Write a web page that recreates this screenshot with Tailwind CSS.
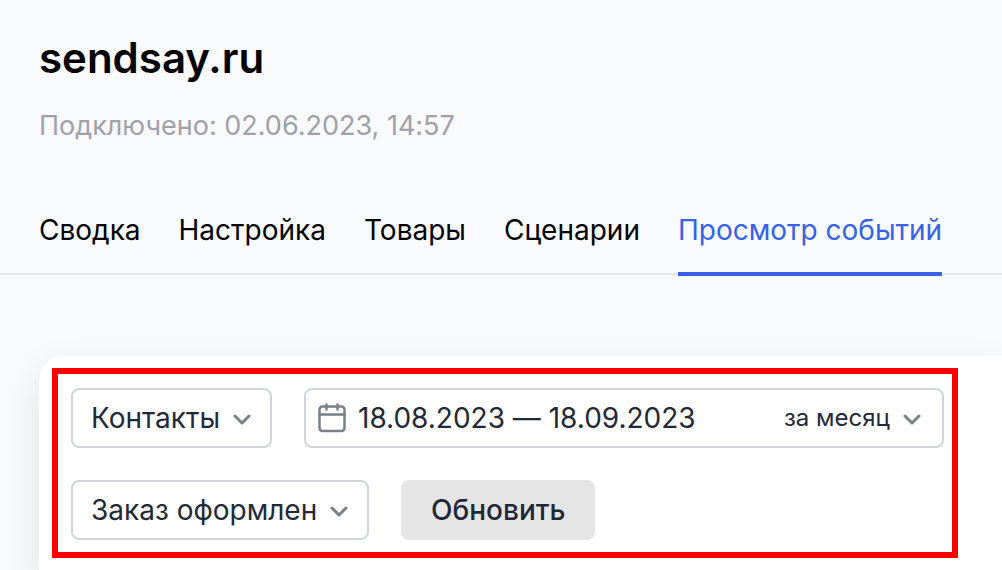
<!DOCTYPE html>
<html lang="ru">
<head>
<meta charset="utf-8">
<meta name="viewport" content="width=device-width, initial-scale=1">
<title>sendsay.ru</title>
<script src="https://cdn.jsdelivr.net/npm/@tailwindcss/browser@4"></script>
</head>
<body class="flex min-h-screen flex-col overflow-x-hidden bg-[#f9fafc] font-['Inter','Liberation_Sans',sans-serif] text-[28px] leading-10 text-black [font-feature-settings:'calt'_0]">
<header class="px-[39px] pt-[30px]">
  <h1 class="text-[42px] leading-[56px] font-semibold">sendsay.ru</h1>
  <p class="mt-5 text-[27px] text-[#a1a1aa]">Подключено: 02.06.2023, 14:57</p>
</header>
<nav class="mt-16 border-b-2 border-[#e5e7eb] px-[39px]" aria-label="Разделы">
  <ul class="-mb-[3px] flex gap-[38px] whitespace-nowrap">
    <li><a href="#summary" class="block pb-[26px]">Сводка</a></li>
    <li><a href="#settings" class="block pb-[26px]">Настройка</a></li>
    <li><a href="#goods" class="block pb-[26px]">Товары</a></li>
    <li><a href="#scenarios" class="block pb-[26px]">Сценарии</a></li>
    <li><a href="#events" aria-current="page" class="block border-b-4 border-[#3662e3] pb-[22px] text-[#3662e3]">Просмотр событий</a></li>
  </ul>
</nav>
<main class="mt-[81px] ml-[39px] grow rounded-tl-[24px] bg-white pt-3 pl-[13px] shadow-[0_16px_40px_rgba(0,0,0,0.1)]">
  <form class="mr-11 flex flex-col gap-8 border-6 border-[#ff0000] pt-3.5 pr-2 pb-3 pl-[13px] text-[#1f2937]">
    <div class="flex gap-8">
      <div class="grid items-center">
        <select aria-label="Объект" class="col-start-1 row-start-1 h-[60px] appearance-none rounded-lg border-2 border-[#d1d5db] bg-white pr-[49px] pl-[18px]"><option>Контакты</option></select>
        <svg class="pointer-events-none col-start-1 row-start-1 mt-1 mr-[21px] justify-self-end" width="18" height="12" viewBox="0 0 18 12" fill="none" stroke="#7b8087" stroke-width="3" stroke-linecap="round" stroke-linejoin="round" aria-hidden="true"><path d="M2 2l7 7 7-7"/></svg>
      </div>
      <div class="flex h-[60px] min-w-0 flex-1 items-center rounded-lg border-2 border-[#d1d5db] bg-white pl-3">
        <svg class="shrink-0" width="28" height="32" viewBox="0 0 28 32" fill="none" stroke="#7b8087" stroke-width="2.5" stroke-linecap="round" aria-hidden="true"><rect x="1.5" y="4.5" width="25" height="24.5" rx="3"/><path d="M1.5 12.5h25M8.5 2.5v5M19.5 2.5v5"/></svg>
        <input type="text" aria-label="Период" value="18.08.2023 — 18.09.2023" class="ml-3 min-w-0 flex-1 bg-transparent">
        <div class="grid items-center">
          <select aria-label="Быстрый выбор периода" class="col-start-1 row-start-1 h-14 appearance-none bg-transparent pr-[52px] text-2xl"><option>за месяц</option></select>
          <svg class="pointer-events-none col-start-1 row-start-1 mt-1 mr-[21px] justify-self-end" width="18" height="12" viewBox="0 0 18 12" fill="none" stroke="#7b8087" stroke-width="3" stroke-linecap="round" stroke-linejoin="round" aria-hidden="true"><path d="M2 2l7 7 7-7"/></svg>
        </div>
      </div>
    </div>
    <div class="flex gap-8">
      <div class="grid items-center">
        <select aria-label="Событие" class="col-start-1 row-start-1 h-[60px] appearance-none rounded-lg border-2 border-[#d1d5db] bg-white pr-[49px] pl-[18px]"><option>Заказ оформлен</option></select>
        <svg class="pointer-events-none col-start-1 row-start-1 mt-1 mr-[21px] justify-self-end" width="18" height="12" viewBox="0 0 18 12" fill="none" stroke="#7b8087" stroke-width="3" stroke-linecap="round" stroke-linejoin="round" aria-hidden="true"><path d="M2 2l7 7 7-7"/></svg>
      </div>
      <button type="button" class="h-[60px] rounded-lg bg-[#e5e5e5] px-[30px] font-medium">Обновить</button>
    </div>
  </form>
</main>
</body>
</html>
